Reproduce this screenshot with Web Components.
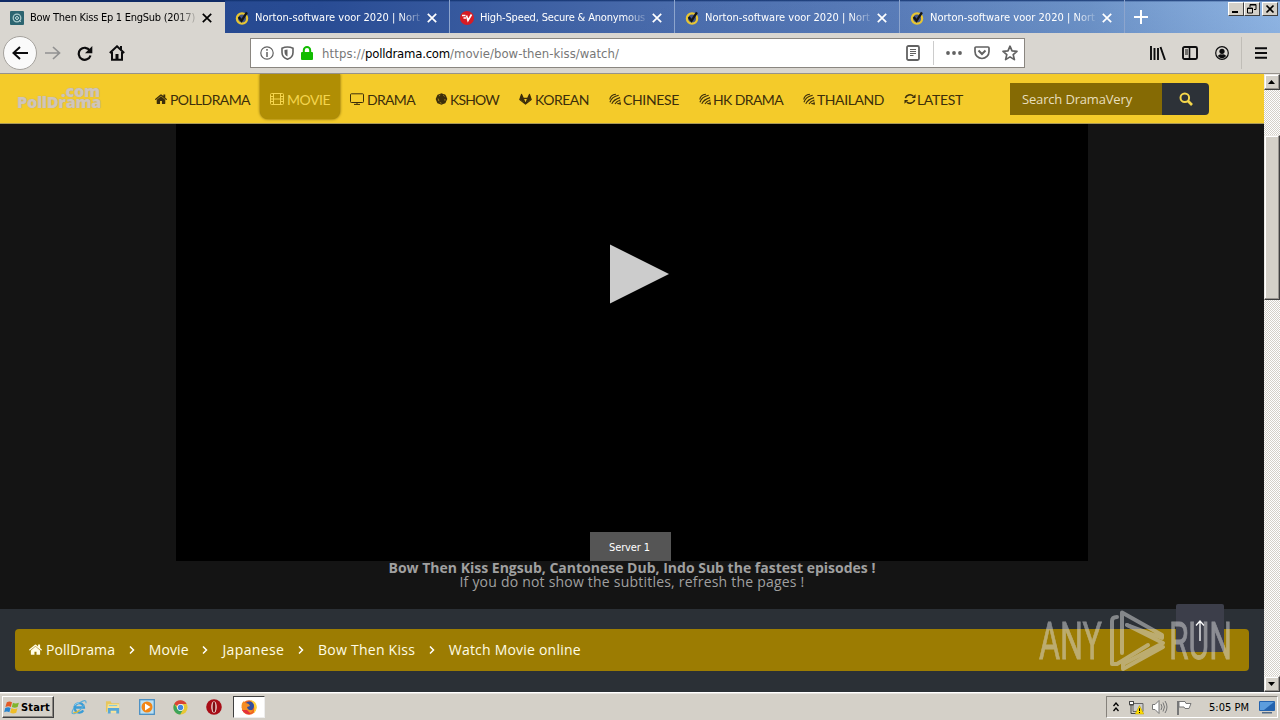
<!DOCTYPE html>
<html lang="en">
<head>
<meta charset="utf-8">
<title>Bow Then Kiss Ep 1 EngSub (2017)</title>
<style>
  body {
    margin: 0;
    width: 1280px;
    height: 720px;
    overflow: hidden;
    font-family: "Open Sans", sans-serif;
  }
</style>
</head>
<body>
<desktop-screen></desktop-screen>

<script>
const icons = {
  home: '<svg viewBox="90 200 1615 1340"><path fill="currentColor" d="M1472 992v480q0 26-19 45t-45 19h-384v-384H768v384H384q-26 0-45-19t-19-45V992q0-1 .5-3t.5-3l575-474 575 474q1 2 1 6zm223-69l-62 74q-8 9-21 11h-3q-13 0-21-7L896 424 204 1001q-12 8-24 7-13-2-21-11l-62-74q-8-10-7-23.5t11-21.5l719-599q32-26 76-26t76 26l244 204V288q0-14 9-23t23-9h192q14 0 23 9t9 23v408l219 182q10 8 11 21.5t-7 23.5z"/></svg>',
  film: '<svg viewBox="0 0 14 12" fill="none" stroke="currentColor"><rect x=".5" y=".5" width="13" height="11" rx="1"/><path d="M3.5 1v10M10.5 1v10M3.5 6h7M1 3.5h2.5M1 6h2.5M1 8.5h2.5M10.5 3.5H13M10.5 6H13M10.5 8.5H13"/></svg>',
  monitor: '<svg viewBox="0 0 14 12" fill="none" stroke="currentColor"><rect x=".5" y=".8" width="13" height="8.7" rx=".8"/><path d="M7 9.5V11M4 11.4h6"/></svg>',
  globe: '<svg viewBox="0 0 14 14"><path d="M7 .2l2 1 2.300.6 1.200 2L13.800 7l-1.300 2.500-1 2.500-2.500.700L7 13.800l-2.300-1-2.500-.8-1-2.500L.2 7l1.100-2.500 1.100-2.500L5 1.200z" fill="currentColor"/><path d="M4 3.500l1.500-1M9 2.500l1.500 1.500M3 6.500l1 3M11 7v2M5 11l2 1" stroke="#f4ca2a" stroke-width=".6"/></svg>',
  gitlab: '<svg viewBox="0 0 14 13"><path fill="none" stroke="currentColor" stroke-width="1.300" stroke-linejoin="round" d="M.8 7.200L2.700 1.500l1.900 4.300h4.800l1.900-4.300 1.900 5.700L7 12zM4.600 5.800L7 12l2.400-6.200"/><path fill="currentColor" d="M.8 7L2.700 1l1.900 5 1.700 4.500zM13.200 7l-1.900-6-1.900 5-1.700 4.500z"/></svg>',
  stripes: '<svg viewBox="0 0 13 12" fill="none" stroke="currentColor" stroke-width="1.200"><path d="M.8 6.500Q1.500 1.500 7.500.8M1 9.500Q3 3.500 10.500 2M3 11.300Q5 6.500 12 4.500M6.500 11.500Q8 8.500 12.300 7M9 10.700l3.300.8-.5-2.800"/></svg>',
  refresh: '<svg viewBox="0 0 13 12"><path d="M1.500 5A5 4.500 0 0 1 10 2.800M11.500 7A5 4.500 0 0 1 3 9.200" fill="none" stroke="currentColor" stroke-width="1.700"/><path d="M12.500.8v4.200H8.300zM.5 11.200V7h4.200z" fill="currentColor"/></svg>',
  search: '<svg viewBox="0 0 14 14" fill="none" stroke="currentColor"><circle cx="5.800" cy="5.800" r="4.300" stroke-width="2"/><path d="M9 9l4 4" stroke-width="2.600"/></svg>',
  close: '<svg viewBox="0 0 10 10"><path d="M.8.8l8.400 8.400M9.200.8L.8 9.200" stroke="currentColor" stroke-width="1.700"/></svg>',
  site: '<svg viewBox="0 0 14 14"><rect width="14" height="14" rx="1" fill="#2c6470"/><circle cx="7" cy="7" r="3.800" fill="none" stroke="#a9c9cb" stroke-width="1.300"/><path d="M5 7l2-2 2 2-2 2zM9 9l2 2" fill="#5d9097" stroke="#c4dadd" stroke-width=".8"/></svg>',
  norton: '<svg viewBox="0 0 15 15"><circle cx="7.500" cy="8" r="5.500" fill="#42558b" stroke="#e8c632" stroke-width="2.400"/><path d="M4 6.500L7 10.500 12.800 1.500" fill="none" stroke="#151515" stroke-width="2.500"/></svg>',
  vpn: '<svg viewBox="0 0 14 14"><circle cx="7" cy="7" r="7" fill="#d71c24"/><path d="M2 4.500h3.500M3.500 7H6M6.500 4.500l1.500 5 3.500-6" fill="none" stroke="#fff" stroke-width="1.700"/></svg>',
  back: '<svg viewBox="0 0 16 14"><path d="M8 1L1.500 7 8 13M1.500 7H16" fill="none" stroke="currentColor" stroke-width="2"/></svg>',
  forward: '<svg viewBox="0 0 16 14"><path d="M8 1l6.500 6L8 13M0 7h14.500" fill="none" stroke="currentColor" stroke-width="1.700"/></svg>',
  reload: '<svg viewBox="0 0 16 15"><path d="M12.800 4.500A6 6 0 1 0 13.500 9.500" fill="none" stroke="currentColor" stroke-width="2.200"/><path d="M15.300 0v7.300H8z" fill="currentColor"/></svg>',
  house: '<svg viewBox="0 0 16 16"><path d="M.8 8L8 1.300 15.200 8M3 7v7.800h10V7" fill="none" stroke="currentColor" stroke-width="2"/><path d="M6.500 9h3v6h-3zM11 1h2v4h-2z" fill="currentColor"/></svg>',
  info: '<svg viewBox="0 0 14 14"><circle cx="7" cy="7" r="6.200" fill="none" stroke="currentColor" stroke-width="1.200"/><path d="M7 6v5M7 3v1.700" stroke="currentColor" stroke-width="1.500"/></svg>',
  shield: '<svg viewBox="0 0 13 14"><path d="M6.500 1C4.500 1 2.500 1.500 1 2.200v4.300C1 10 3.500 12.200 6.500 13.200 9.500 12.200 12 10 12 6.500V2.200C10.500 1.500 8.500 1 6.500 1z" fill="none" stroke="currentColor" stroke-width="1.600"/><path d="M6.500 3.500v7C4.500 9.500 3.500 8 3.500 6V4z" fill="currentColor"/></svg>',
  lock: '<svg viewBox="0 0 12 14"><rect y="6" width="12" height="8" rx="1" fill="#12bc00"/><path d="M2.800 7V4.200a3.200 3.200 0 0 1 6.400 0V7" fill="none" stroke="#12bc00" stroke-width="2"/></svg>',
  reader: '<svg viewBox="0 0 14 16" fill="none" stroke="currentColor"><rect x="1" y="1" width="12" height="14" rx="1.500" stroke-width="1.800"/><path d="M4 4.500h6M4 6.500h6M4 8.500h6M4 10.500h3.500"/></svg>',
  pocket: '<svg viewBox="0 0 16 14" fill="none" stroke="currentColor" stroke-width="1.700"><path d="M2 1h12q1 0 1 1v3.500a7 7 0 0 1-14 0V2q0-1 1-1z"/><path d="M4.500 4.500L8 8l3.500-3.500" stroke-width="2"/></svg>',
  star: '<svg viewBox="0 0 16 16"><path d="M8 1.200l2 4.700 5 .4-3.800 3.300 1.200 5L8 11.900l-4.400 2.700 1.200-5L1 6.300l5-.4z" fill="none" stroke="currentColor" stroke-width="1.700" stroke-linejoin="round"/></svg>',
  library: '<svg viewBox="0 0 16 14"><path d="M1 0v14M4.500 2v12M8 2v12M10.500 1l4.500 13" stroke="currentColor" stroke-width="1.900"/></svg>',
  sidebar: '<svg viewBox="0 0 16 14" fill="none" stroke="currentColor"><rect x="1" y="1" width="14" height="12" rx="1.500" stroke-width="1.900"/><path d="M7.500 1v12" stroke-width="1.600"/><path d="M3 4h3M3 6h3M3 8h3"/></svg>',
  account: '<svg viewBox="0 0 14 14"><circle cx="7" cy="7" r="6.300" fill="none" stroke="currentColor" stroke-width="1.200"/><circle cx="7" cy="5.300" r="2.600" fill="currentColor"/><path d="M2.800 10Q4.500 7.700 7 8.500 9.500 7.700 11.200 10 7 14.500 2.800 10z" fill="currentColor"/></svg>',
  menu: '<svg viewBox="0 0 12 12"><path d="M0 1.200h12M0 6h12M0 10.800h12" stroke="currentColor" stroke-width="1.900"/></svg>',
  windows: '<svg viewBox="0 0 17 15"><path d="M3 2Q6 0 8.500 2L7.300 7Q5 5.500 1.500 7z" fill="#e35a25"/><path d="M9.500 2.500Q12 4 15.800 2.400L14.500 7Q11.500 8.700 8.300 7z" fill="#80b52e"/><path d="M1.300 8Q4.500 6.500 7 8l-1.300 4.500Q3 11 .2 12.500z" fill="#2784cf"/><path d="M8 8q3 2 6.300.3L13 13q-3.500 1.700-6.500-.2z" fill="#efbd28"/></svg>',
  ie: '<svg viewBox="0 0 17 17"><path d="M13 12A5 5 0 1 1 13.700 9H5" fill="none" stroke="#3a9cd6" stroke-width="2.500"/><path d="M10 3.500Q16.500-.5 16 4.500M3 9.500Q-1 16.500 3.500 15.500 9 14 14 6" fill="none" stroke="#5baed8" stroke-width="1.200"/><path d="M2.500 14.500Q6 15 9 12" fill="none" stroke="#e0bd38" stroke-width="1.400"/><path d="M4 7Q5.500 4 9 4" fill="none" stroke="#a3dcf5"/></svg>',
  folder: '<svg viewBox="0 0 17 16"><path d="M1 2h5l1 2h8v9H1z" fill="#e7c65e"/><path d="M3 5h12v9H2z" fill="#f7e49b"/><path d="M3 15V9h12v6h-3v-3H6v3z" fill="#58a7d7"/><path d="M4 6.500h9" stroke="#75c4e5"/></svg>',
  player: '<svg viewBox="0 0 16 16"><rect x=".7" y=".7" width="14.600" height="14.600" fill="#bce0f3" stroke="#498fc4" stroke-width="1.300"/><circle cx="8" cy="8" r="5.500" fill="#f28616"/><path d="M6 4.500L11.500 8 6 11.500z" fill="#fff"/></svg>',
  chrome: '<svg viewBox="0 0 14 14"><circle cx="7" cy="7" r="6.600" fill="#e8c735"/><path d="M7 7L1 4A6.600 6.600 0 0 1 12.700 3.700H7z" fill="#d94336"/><path d="M1.300 3.600A6.600 6.600 0 0 0 6.700 13.600l3-5.100H4.200z" fill="#3da45b"/><circle cx="7" cy="7" r="3.200" fill="#fff"/><circle cx="7" cy="7" r="2.500" fill="#4287df"/></svg>',
  opera: '<svg viewBox="0 0 15 15"><circle cx="7.500" cy="7.500" r="7.300" fill="#a80d17"/><ellipse cx="7.500" cy="7.500" rx="2.600" ry="5.500" fill="#efd9d5"/><ellipse cx="7.500" cy="7.500" rx="1.300" ry="5" fill="#7e0b12"/></svg>',
  firefox: '<svg viewBox="0 0 16 16"><circle cx="8" cy="8.500" r="7.300" fill="#ef6820"/><path d="M9 1q7 1 6.700 8-.3 3-3 5Q15 6 9 1z" fill="#ffd13c"/><circle cx="8.500" cy="7" r="4.500" fill="#314fa0"/><path d="M.8 8Q0 4 3 2l1 2q4 0 5 3l-3 1q1 4 6 3-3 5-8 3-3-2-3.200-6z" fill="#f58e24"/><path d="M1 11q3 5 9 4l-4-4z" fill="#e4323d"/></svg>',
  network: '<svg viewBox="0 0 16 15"><path d="M5 3.500h10v8H5z" fill="#ccc" stroke="#666"/><path d="M1.500 1v4h1.500v8.500h6M5.500 1v4H3" fill="none" stroke="#444"/><path d="M1.500 1.500h4v3h-4z" fill="#fff" stroke="#444"/><path d="M11.500 5.500L15.800 14H7.200z" fill="#ffdc00" stroke="#b59b00" stroke-width=".5"/><path d="M11.500 8.300V11M11.500 12v1" stroke="#000"/></svg>',
  sound: '<svg viewBox="0 0 16 14" fill="none" stroke="#777"><path d="M.5 4.500H3l4-4v13l-4-4H.500z" fill="#fff"/><path d="M9 4q2 3 0 6M11 2.500q3 4.500 0 9M13 1q4 6 0 12"/></svg>',
  flag: '<svg viewBox="0 0 16 15"><path d="M2 1v14" stroke="#777" stroke-width="2"/><path d="M3 1.500h6l1 2h5l-2 5H9l-1-1.500H3z" fill="#fff" stroke="#777"/></svg>',
  desktop: '<svg viewBox="0 0 16 13"><rect width="16" height="10" rx="1" fill="#2463ae"/><path d="M1 1h14L5 9H1z" fill="#5c9ddd"/><path d="M3 11h10v1.500H3z" fill="#526a86"/></svg>'
}

class UiIcon extends HTMLElement {
  connectedCallback () {
    const width = this.getAttribute('w') || 14
    const height = this.getAttribute('h') || width
    this.attachShadow({ mode: 'open' }).innerHTML = /* html */ `
      <style>
        :host{
          display: block;
          flex: none;
          height: ${height}px;
          width: ${width}px;
        }

        svg{
          display: block;
          height: 100%;
          width: 100%;
        }
      </style>
      ${icons[this.getAttribute('name')]}
    `
  }
}

// A single line of text whose tracking is adjusted to fill the given width
class FitLabel extends HTMLElement {
  connectedCallback () {
    const width = Number(this.getAttribute('width'))
    this.attachShadow({ mode: 'open' }).innerHTML = /* html */ `
      <style>
        :host{
          display: block;
          flex: none;
          white-space: nowrap;
          width: ${width}px;
        }
      </style>
      <span><slot></slot></span>
    `
    const span = this.shadowRoot.querySelector('span')
    const natural = span.getBoundingClientRect().width
    span.style.letterSpacing = `${(width - natural) / this.textContent.length}px`
  }
}

class BrowserTab extends HTMLElement {
  connectedCallback () {
    this.attachShadow({ mode: 'open' }).innerHTML = /* html */ `
      <style>
        :host{
          align-items: center;
          border-right: 1px solid #8da5cd;
          box-sizing: border-box;
          color: #fff;
          display: flex;
          height: 33px;
          padding: 2px 0 0 10px;
          width: 225px;
        }

        :host([active]){
          background: #d9d6d0;
          border-right: 0;
          border-top: 2px solid #102b65;
          color: #000;
          padding-top: 0;
        }

        .title{
          margin: 0 7px 0 6px;
          -webkit-mask: linear-gradient(90deg, #000 88%, #0003);
          mask: linear-gradient(90deg, #000 88%, #0003);
        }
      </style>
      <ui-icon name="${this.getAttribute('icon')}" w="14"></ui-icon>
      <fit-label class="title" width="165">${this.getAttribute('label')}</fit-label>
      <ui-icon name="close" w="10"></ui-icon>
    `
  }
}

class BrowserTabs extends HTMLElement {
  connectedCallback () {
    this.attachShadow({ mode: 'open' }).innerHTML = /* html */ `
      <style>
        :host{
          background: linear-gradient(#10306c 0, transparent 2px), linear-gradient(172deg, transparent 45%, #183b7b22), linear-gradient(90deg, #20438a 0, #294c94 25%, #4a6cac 52%, #5c7fbb 70%, #7298cc 85%, #9dc3ef 100%);
          display: flex;
          font: 11px "DejaVu Sans Condensed", "DejaVu Sans", sans-serif;
          height: 33px;
        }

        .plus{
          align-self: center;
          color: #fff;
          margin-left: 9px;
        }

        .plus svg{
          display: block;
        }

        .windows{
          display: flex;
          margin: 2px 2px 0 auto;
        }

        .windows svg{
          background: #d4d0c8;
          border: 1px solid;
          border-color: #fff #404040 #404040 #fff;
          box-sizing: border-box;
          height: 14px;
          width: 16px;
        }

        .windows svg:last-child{
          margin-left: 2px;
        }
      </style>
      <browser-tab active icon="site" label="Bow Then Kiss Ep 1 EngSub (2017)"></browser-tab>
      <browser-tab icon="norton" label="Norton-software voor 2020 | Nort"></browser-tab>
      <browser-tab icon="vpn" label="High-Speed, Secure &amp; Anonymous"></browser-tab>
      <browser-tab icon="norton" label="Norton-software voor 2020 | Nort"></browser-tab>
      <browser-tab icon="norton" label="Norton-software voor 2020 | Nort"></browser-tab>
      <div class="plus"><svg width="14" height="14"><path d="M7 0v14M0 7h14" stroke="#fff" stroke-width="2"/></svg></div>
      <div class="windows">
        <svg viewBox="0 0 14 12"><path d="M3 9h6" stroke="#000" stroke-width="2"/></svg>
        <svg viewBox="0 0 14 12"><path d="M5 4V1.500h6v5H9M5 2h6M2.500 5h5v5h-5zM2.500 5.500h5" fill="none" stroke="#000"/></svg>
        <svg viewBox="0 0 14 12"><path d="M3.500 2.500l7 7M10.500 2.500l-7 7" stroke="#000" stroke-width="1.700"/></svg>
      </div>
    `
  }
}

class BrowserToolbar extends HTMLElement {
  connectedCallback () {
    this.attachShadow({ mode: 'open' }).innerHTML = /* html */ `
      <style>
        :host{
          align-items: center;
          background: #d9d6d0;
          border-bottom: 1px solid #96928c;
          box-sizing: border-box;
          color: #0c0c0d;
          display: flex;
          height: 41px;
          padding: 0 13px 0 3px;
        }

        .back{
          align-items: center;
          background: #fafafa;
          border: 1px solid #a5a29d;
          border-radius: 50%;
          box-sizing: border-box;
          display: flex;
          height: 34px;
          justify-content: center;
          width: 34px;
        }

        .buttons{
          align-items: center;
          display: flex;
          gap: 16px;
          margin-left: 8px;
        }

        .forward{
          color: #919191;
        }

        .address{
          align-items: center;
          background: #fff;
          border: 1px solid #8a8680;
          box-sizing: border-box;
          color: #626262;
          display: flex;
          font: 13px "DejaVu Sans Condensed", "DejaVu Sans", sans-serif;
          height: 30px;
          margin-left: 125px;
          padding: 0 6px 0 9px;
          width: 775px;
        }

        .identity{
          align-items: center;
          display: flex;
          gap: 7px;
          margin-right: 9px;
        }

        .url{
          color: #777;
          display: flex;
        }

        .domain{
          color: #000;
        }

        .actions{
          align-items: center;
          display: flex;
          gap: 12px;
          margin-left: auto;
        }

        .divider{
          background: #ccc;
          height: 24px;
          width: 1px;
        }

        .actions .divider{
          margin-left: 1px;
        }

        .tools{
          align-items: center;
          display: flex;
          gap: 16px;
          margin-left: auto;
        }

        .tools .divider{
          background: #c0bdb7;
          height: 32px;
          margin: 0 -3px 0 -4px;
        }

        .sidebar{
          margin-right: 1px;
        }
      </style>
      <div class="back"><ui-icon name="back" w="16" h="14"></ui-icon></div>
      <div class="buttons">
        <ui-icon class="forward" name="forward" w="16" h="14"></ui-icon>
        <ui-icon name="reload" w="16" h="15"></ui-icon>
        <ui-icon name="house" w="16"></ui-icon>
      </div>
      <div class="address">
        <div class="identity">
          <ui-icon name="info" w="14"></ui-icon>
          <ui-icon name="shield" w="13" h="14"></ui-icon>
          <ui-icon name="lock" w="12" h="14"></ui-icon>
        </div>
        <div class="url">
          <fit-label width="43">https://</fit-label>
          <fit-label class="domain" width="85">polldrama.com</fit-label>
          <fit-label width="169">/movie/bow-then-kiss/watch/</fit-label>
        </div>
        <div class="actions">
          <ui-icon name="reader" w="14" h="16"></ui-icon>
          <div class="divider"></div>
          <svg width="16" height="4" fill="#626262"><circle cx="2" cy="2" r="1.900"/><circle cx="8" cy="2" r="1.900"/><circle cx="14" cy="2" r="1.900"/></svg>
          <ui-icon name="pocket" w="16" h="14"></ui-icon>
          <ui-icon name="star" w="16"></ui-icon>
        </div>
      </div>
      <div class="tools">
        <ui-icon name="library" w="16" h="14"></ui-icon>
        <ui-icon class="sidebar" name="sidebar" w="16" h="14"></ui-icon>
        <ui-icon name="account" w="14"></ui-icon>
        <div class="divider"></div>
        <ui-icon name="menu" w="12"></ui-icon>
      </div>
    `
  }
}

class NavItem extends HTMLElement {
  connectedCallback () {
    this.attachShadow({ mode: 'open' }).innerHTML = /* html */ `
      <style>
        :host{
          align-items: center;
          box-sizing: border-box;
          color: #3c2e0b;
          display: flex;
          font: 14px Lato, sans-serif;
          height: 45px;
          justify-content: space-between;
          padding: 5px 10px 0;
        }

        :host([active]){
          background: #b08e04;
          border-radius: 0 0 8px 8px;
          box-shadow: 0 0 3px #665100;
          clip-path: inset(0 -4px -4px);
          color: #f4d44d;
        }
      </style>
      <ui-icon name="${this.getAttribute('icon')}" w="${this.getAttribute('size')}" h="12"></ui-icon>
      <fit-label width="${this.getAttribute('width')}">${this.getAttribute('label')}</fit-label>
    `
  }
}

class SiteHeader extends HTMLElement {
  connectedCallback () {
    this.loadData()
    this.render()
  }

  loadData () {
    this.data = [
      { label: 'POLLDRAMA', icon: 'home', size: 12, width: 80 },
      { label: 'MOVIE', icon: 'film', size: 14, width: 43, active: true },
      { label: 'DRAMA', icon: 'monitor', size: 14, width: 48 },
      { label: 'KSHOW', icon: 'globe', size: 13, width: 49 },
      { label: 'KOREAN', icon: 'gitlab', size: 13, width: 54 },
      { label: 'CHINESE', icon: 'stripes', size: 12, width: 56 },
      { label: 'HK DRAMA', icon: 'stripes', size: 12, width: 70 },
      { label: 'THAILAND', icon: 'stripes', size: 12, width: 67 },
      { label: 'LATEST', icon: 'refresh', size: 12, width: 46 }
    ]
  }

  render () {
    this.attachShadow({ mode: 'open' }).innerHTML = /* html */ `
      <style>
        :host{
          background: #f4cb2a;
          border-bottom: 1px solid #a99958;
          box-sizing: border-box;
          display: flex;
          height: 50px;
        }

        .logo{
          color: #d0c5bb;
          font: 800 16px/10px "Open Sans", sans-serif;
          margin: 12px 0 0 17px;
          text-shadow: 0 0 1px #aaa18e;
          width: 128px;
        }

        .logo fit-label:first-of-type{
          margin: 0 0 1px 44px;
        }

        nav{
          display: grid;
          grid-template-columns: 115px 80px 85px 84px 90px 90px 104px 101px 79px;
          height: 45px;
        }

        .search{
          display: flex;
          height: 32px;
          margin: 9px 0 0 37px;
        }

        .field{
          background: #856a04;
          box-sizing: border-box;
          color: #e8dfbd;
          font: 13px/32px "Open Sans", sans-serif;
          padding-left: 12px;
          width: 152px;
        }

        .button{
          align-items: center;
          background: #2d3238;
          border-radius: 0 4px 4px 0;
          color: #f4d64b;
          display: flex;
          justify-content: center;
          width: 47px;
        }
      </style>
      <div class="logo">
        <fit-label width="39">.com</fit-label>
        <fit-label width="84">PollDrama</fit-label>
      </div>
      <nav>
        ${this.data.map(item => `<nav-item ${item.active ? 'active' : ''} icon="${item.icon}" size="${item.size}" width="${item.width}" label="${item.label}"></nav-item>`).join('')}
      </nav>
      <div class="search">
        <div class="field"><fit-label width="110">Search DramaVery</fit-label></div>
        <div class="button"><ui-icon name="search" w="14"></ui-icon></div>
      </div>
    `
  }
}

class VideoPlayer extends HTMLElement {
  connectedCallback () {
    this.attachShadow({ mode: 'open' }).innerHTML = /* html */ `
      <style>
        :host{
          align-items: center;
          background: #141414;
          color: #a0a0a0;
          display: flex;
          flex-direction: column;
          font: 14px/14px "Open Sans", sans-serif;
          height: 485px;
        }

        .video{
          background: #000;
          display: flex;
          flex: none;
          flex-direction: column;
          height: 437px;
          width: 912px;
        }

        .play{
          display: block;
          margin: 120px 0 0 434px;
        }

        .server{
          background: #555;
          color: #fff;
          font: 11px/31px "DejaVu Sans Condensed", "DejaVu Sans", sans-serif;
          height: 29px;
          margin: auto 0 0 414px;
          padding-left: 19px;
          width: 62px;
        }

        .note{
          align-items: center;
          display: flex;
          flex-direction: column;
        }

        b{
          font-weight: 700;
        }
      </style>
      <div class="video">
        <svg class="play" width="60" height="60"><path d="M0 .5L59 30 0 59.500z" fill="#ccc"/></svg>
        <div class="server"><fit-label width="41">Server 1</fit-label></div>
      </div>
      <div class="note">
        <b><fit-label width="487">Bow Then Kiss Engsub, Cantonese Dub, Indo Sub the fastest episodes !</fit-label></b>
        <fit-label width="345">If you do not show the subtitles, refresh the pages !</fit-label>
      </div>
    `
  }
}

class BreadCrumbs extends HTMLElement {
  connectedCallback () {
    const chevron = '<svg width="6" height="8"><path d="M1 .5L4.500 4 1 7.500" fill="none" stroke="#fff" stroke-width="1.500"/></svg>'
    this.attachShadow({ mode: 'open' }).innerHTML = /* html */ `
      <style>
        :host{
          background: #2b3036;
          box-sizing: border-box;
          display: block;
          height: 83px;
          padding: 20px 15px;
        }

        .bar{
          align-items: center;
          background: #9c7c02;
          border-radius: 4px;
          box-sizing: border-box;
          color: #fffce6;
          display: flex;
          font: 14px "Open Sans", sans-serif;
          height: 42px;
          padding: 0 0 1px 14px;
        }

        ui-icon{
          margin-right: 4px;
        }

        svg{
          margin: 0 14px 0 13.7px;
        }
      </style>
      <div class="bar">
        <ui-icon name="home" w="13" h="11"></ui-icon>
        <fit-label width="69">PollDrama</fit-label>${chevron}
        <fit-label width="40">Movie</fit-label>${chevron}
        <fit-label width="62">Japanese</fit-label>${chevron}
        <fit-label width="97">Bow Then Kiss</fit-label>${chevron}
        <fit-label width="132">Watch Movie online</fit-label>
      </div>
    `
  }
}

class BackTop extends HTMLElement {
  connectedCallback () {
    this.attachShadow({ mode: 'open' }).innerHTML = /* html */ `
      <style>
        :host{
          align-items: center;
          background: #3c3e4a;
          border-radius: 2px;
          box-sizing: border-box;
          display: flex;
          height: 48px;
          justify-content: center;
          padding-top: 4px;
          width: 48px;
        }
      </style>
      <svg width="10" height="21"><path d="M5 21V1M1 5.500L5 1l4 4.500" fill="none" stroke="#fff" stroke-width="1.300"/></svg>
    `
  }
}

class WaterMark extends HTMLElement {
  connectedCallback () {
    this.attachShadow({ mode: 'open' }).innerHTML = /* html */ `
      <style>
        :host{
          display: block;
          opacity: .5;
        }

        svg{
          display: block;
        }

        text{
          fill: #ddd;
          font: 51px Roboto, sans-serif;
          stroke: #ddd;
          stroke-width: .8px;
        }
      </style>
      <svg width="200" height="64">
        <text x="0" y="49" textLength="63" lengthAdjust="spacingAndGlyphs">ANY</text>
        <text x="130" y="49" textLength="63" lengthAdjust="spacingAndGlyphs">RUN</text>
        <g fill="none" stroke="#ddd" stroke-width="4" stroke-linejoin="round" stroke-linecap="round">
          <path d="M78 7Q73 7 73 11V54H78L109 35"/>
          <path d="M83 43V2.500L123 25V28L88 15"/>
          <path d="M88 15L124 33 84 54V59L124 37"/>
        </g>
      </svg>
    `
  }
}

class ScrollBar extends HTMLElement {
  connectedCallback () {
    this.attachShadow({ mode: 'open' }).innerHTML = /* html */ `
      <style>
        :host{
          background: repeating-conic-gradient(#fff 0 25%, #d4d0c8 0 50%) 0 0 / 2px 2px;
          display: flex;
          flex-direction: column;
          width: 16px;
        }

        .raised{
          background: #d4d0c8;
          border: 1px solid;
          border-color: #ece9e4 #404040 #404040 #ece9e4;
          box-shadow: inset -1px -1px #999590, inset 1px 1px #fff;
          box-sizing: border-box;
          height: 16px;
        }

        .raised svg{
          display: block;
        }

        .thumb{
          height: 165px;
          margin: 45px 0 auto;
        }
      </style>
      <div class="raised"><svg width="14" height="14"><path d="M3 9h7L6.500 5z"/></svg></div>
      <div class="raised thumb"></div>
      <div class="raised"><svg width="14" height="14"><path d="M3 5h7L6.500 9z"/></svg></div>
    `
  }
}

class TaskBar extends HTMLElement {
  connectedCallback () {
    this.attachShadow({ mode: 'open' }).innerHTML = /* html */ `
      <style>
        :host{
          align-items: center;
          background: #d4d0c8;
          border-top: 1px solid #fff;
          box-shadow: inset 0 1px #e8e5e0;
          box-sizing: border-box;
          display: flex;
          font: 11px "DejaVu Sans Condensed", "DejaVu Sans", sans-serif;
          height: 28px;
          padding: 1px 2px 0;
        }

        .start{
          align-items: center;
          border: 1px solid;
          border-color: #fff #404040 #404040 #fff;
          box-shadow: inset -1px -1px #8b8782;
          box-sizing: border-box;
          display: flex;
          font-weight: 700;
          gap: 1px;
          height: 22px;
          padding-left: 1px;
          width: 52px;
        }

        .apps{
          align-items: center;
          display: flex;
          gap: 18px;
          margin-left: 17px;
        }

        .current{
          align-items: center;
          background: #fff;
          border: 1px solid;
          border-color: #404040 #eee #eee #404040;
          box-sizing: border-box;
          display: flex;
          height: 22px;
          justify-content: center;
          margin-left: -7px;
          width: 32px;
        }

        .tray{
          align-items: center;
          border: 1px solid;
          border-color: #85817b #fff #fff #85817b;
          box-sizing: border-box;
          display: flex;
          gap: 8px;
          height: 22px;
          margin-left: auto;
          padding: 0 2px 0 6px;
          width: 172px;
        }

        .tray svg{
          flex: none;
        }

        .tray fit-label{
          margin: 0 2px 0 9px;
        }
      </style>
      <div class="start"><ui-icon name="windows" w="16" h="15"></ui-icon><fit-label width="29">Start</fit-label></div>
      <div class="apps">
        <ui-icon name="ie" w="16"></ui-icon>
        <ui-icon name="folder" w="16"></ui-icon>
        <ui-icon name="player" w="16"></ui-icon>
        <ui-icon name="chrome" w="15"></ui-icon>
        <ui-icon name="opera" w="16"></ui-icon>
        <div class="current"><ui-icon name="firefox" w="16"></ui-icon></div>
      </div>
      <div class="tray">
        <svg width="7" height="10" fill="none" stroke="#000" stroke-width="1.300"><path d="M.5 4l2.500-3 2.500 3M.5 9L3 6l2.500 3"/></svg>
        <ui-icon name="network" w="16" h="15"></ui-icon>
        <ui-icon name="sound" w="16" h="14"></ui-icon>
        <ui-icon name="flag" w="16" h="15"></ui-icon>
        <fit-label width="40">5:05 PM</fit-label>
        <ui-icon name="desktop" w="16" h="13"></ui-icon>
      </div>
    `
  }
}

class DesktopScreen extends HTMLElement {
  connectedCallback () {
    this.attachShadow({ mode: 'open' }).innerHTML = /* html */ `
      <style>
        :host{
          display: flex;
          flex-direction: column;
          height: 720px;
          width: 1280px;
        }

        .viewport{
          display: grid;
          grid-template-columns: 1264px 16px;
          height: 618px;
          position: relative;
        }

        /* floats over the page content */
        back-top{
          bottom: 40px;
          position: absolute;
          right: 56px;
        }

        water-mark{
          bottom: 18px;
          position: absolute;
          right: 41px;
        }
      </style>
      <browser-tabs></browser-tabs>
      <browser-toolbar></browser-toolbar>
      <div class="viewport">
        <main>
          <site-header></site-header>
          <video-player></video-player>
          <bread-crumbs></bread-crumbs>
        </main>
        <scroll-bar></scroll-bar>
        <back-top></back-top>
        <water-mark></water-mark>
      </div>
      <task-bar></task-bar>
    `
  }
}

customElements.define('ui-icon', UiIcon)
customElements.define('fit-label', FitLabel)
customElements.define('browser-tab', BrowserTab)
customElements.define('browser-tabs', BrowserTabs)
customElements.define('browser-toolbar', BrowserToolbar)
customElements.define('nav-item', NavItem)
customElements.define('site-header', SiteHeader)
customElements.define('video-player', VideoPlayer)
customElements.define('bread-crumbs', BreadCrumbs)
customElements.define('back-top', BackTop)
customElements.define('water-mark', WaterMark)
customElements.define('scroll-bar', ScrollBar)
customElements.define('task-bar', TaskBar)
customElements.define('desktop-screen', DesktopScreen)
</script>
</body>
</html>
